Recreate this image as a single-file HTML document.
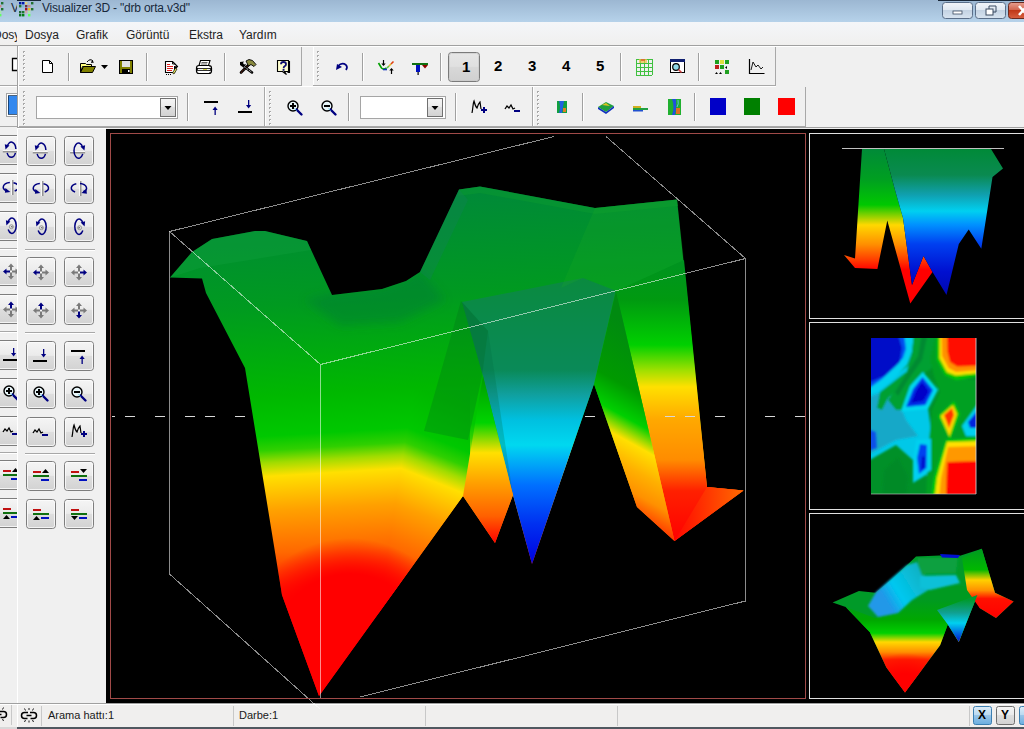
<!DOCTYPE html>
<html><head><meta charset="utf-8">
<style>
*{box-sizing:border-box}
body{margin:0;width:1024px;height:729px;overflow:hidden;position:relative;background:#f0f0f0;font-family:"Liberation Sans",sans-serif;color:#000}
.a{position:absolute}
.mi{position:absolute;top:28px;font-size:12px;color:#1e1e1e;line-height:14px}
.st{position:absolute;top:709px;font-size:11px;color:#1a1a1a;line-height:12px}
.dg{position:absolute;top:58px;font-size:15px;font-weight:bold;line-height:16px}
</style></head><body>

<svg class="a" style="left:0;top:0" width="1024" height="729" viewBox="0 0 1024 729">
<defs>
<linearGradient id="btnG" x1="0" y1="0" x2="0" y2="1">
<stop offset="0" stop-color="#f5f5f5"/><stop offset="0.48" stop-color="#ebebeb"/><stop offset="0.5" stop-color="#dedede"/><stop offset="1" stop-color="#d2d2d2"/>
</linearGradient>
<linearGradient id="btnP" x1="0" y1="0" x2="0" y2="1">
<stop offset="0" stop-color="#e6e6e6"/><stop offset="0.48" stop-color="#e0e0e0"/><stop offset="0.5" stop-color="#d8d8d8"/><stop offset="1" stop-color="#d0d0d0"/>
</linearGradient>
<linearGradient id="tbtn" x1="0" y1="0" x2="0" y2="1">
<stop offset="0" stop-color="#f2f5f9"/><stop offset="0.5" stop-color="#dfe7f0"/><stop offset="0.5" stop-color="#c4d3e3"/><stop offset="1" stop-color="#d8e4f0"/>
</linearGradient>
<linearGradient id="cbtn" x1="0" y1="0" x2="0" y2="1">
<stop offset="0" stop-color="#e8a090"/><stop offset="0.5" stop-color="#d06048"/><stop offset="0.5" stop-color="#c03818"/><stop offset="1" stop-color="#d86040"/>
</linearGradient>
<linearGradient id="xbtn" x1="0" y1="0" x2="0" y2="1">
<stop offset="0" stop-color="#dcecf8"/><stop offset="0.5" stop-color="#b8d8f0"/><stop offset="0.5" stop-color="#98c4e8"/><stop offset="1" stop-color="#6aaee0"/>
</linearGradient>
</defs>
<linearGradient id="ttl" x1="0" y1="0" x2="0" y2="1"><stop offset="0" stop-color="#9cb7d2"/><stop offset="1" stop-color="#b6d2ea"/></linearGradient>
<rect x="0" y="0" width="1024" height="22" fill="url(#ttl)"/>
<linearGradient id="mnu" x1="0" y1="0" x2="0" y2="1"><stop offset="0" stop-color="#f4f6f9"/><stop offset="1" stop-color="#f0efee"/></linearGradient>
<rect x="0" y="22" width="1024" height="24" fill="url(#mnu)"/>
<rect x="17" y="0" width="24" height="1" fill="#1a2838"/>
<rect x="938" y="0" width="86" height="1" fill="#1a2838"/>
<rect x="19" y="2" width="2.4" height="2.4" fill="#0018a0"/>
<rect x="22" y="2" width="2.4" height="2.4" fill="#0018b0"/>
<rect x="25" y="2" width="2.4" height="2.4" fill="#e0d080"/>
<rect x="31" y="2" width="2.4" height="2.4" fill="#207030"/>
<rect x="19" y="5" width="2.4" height="2.4" fill="#207838"/>
<rect x="22" y="5" width="2.4" height="2.4" fill="#80b8d8"/>
<rect x="25" y="5" width="2.4" height="2.4" fill="#703040"/>
<rect x="28" y="5" width="2.4" height="2.4" fill="#d08888"/>
<rect x="25" y="8" width="2.4" height="2.4" fill="#a01020"/>
<rect x="28" y="8" width="2.4" height="2.4" fill="#e8c020"/>
<rect x="31" y="8" width="2.4" height="2.4" fill="#207030"/>
<rect x="19" y="11" width="2.4" height="2.4" fill="#206838"/>
<rect x="22" y="11" width="2.4" height="2.4" fill="#207830"/>
<rect x="25" y="11" width="2.4" height="2.4" fill="#d0a8a8"/>
<rect x="28" y="11" width="2.4" height="2.4" fill="#a8e8a8"/>
<rect x="19" y="14" width="2.4" height="2.4" fill="#107020"/>
<rect x="22" y="14" width="2.4" height="2.4" fill="#008010"/>
<rect x="28" y="14" width="2.4" height="2.4" fill="#60ff60"/>
<rect x="1" y="2" width="2.4" height="2.4" fill="#207030"/><rect x="1" y="8" width="2.4" height="2.4" fill="#207030"/><rect x="0" y="5" width="1.4" height="2.4" fill="#d08888"/><rect x="0" y="11" width="1.4" height="2.4" fill="#a8e8a8"/><rect x="0" y="14" width="1.4" height="2.4" fill="#60ff60"/>
<rect x="942.5" y="2.5" width="30" height="16" rx="3" fill="url(#tbtn)" stroke="#5a6e88"/>
<rect x="953" y="11" width="9" height="3" fill="#fff" stroke="#3a4a60" stroke-width="0.8"/>
<rect x="975.5" y="2.5" width="30" height="16" rx="3" fill="url(#tbtn)" stroke="#5a6e88"/>
<rect x="986" y="9" width="7" height="6" fill="#fff" stroke="#3a4a60" stroke-width="1"/><path d="M989 9 v-3 h7 v6 h-3" fill="none" stroke="#3a4a60" stroke-width="1"/>
<rect x="1008.5" y="2.5" width="30" height="16" rx="3" fill="url(#cbtn)" stroke="#6a2a20"/>
<path d="M1019 6 l8 9 M1027 6 l-8 9" stroke="#fff" stroke-width="2.6"/>
<rect x="0" y="45" width="1024" height="1" fill="#a0a0a0"/><rect x="0" y="46" width="1024" height="1" fill="#fff"/>
<rect x="0" y="127" width="1024" height="1" fill="#a0a0a0"/><rect x="0" y="128" width="106" height="1" fill="#fff"/>
<rect x="17" y="85" width="285" height="1" fill="#a8a8a8"/><rect x="301" y="47" width="1" height="39" fill="#a8a8a8"/>
<rect x="313" y="85" width="463" height="1" fill="#a8a8a8"/><rect x="775" y="47" width="1" height="39" fill="#a8a8a8"/><rect x="313" y="47" width="1" height="38" fill="#fff"/>
<rect x="17" y="86" width="759" height="1" fill="#fff"/>
<rect x="17" y="126" width="248" height="1" fill="#a8a8a8"/><rect x="264" y="87" width="1" height="40" fill="#a8a8a8"/>
<rect x="265" y="126" width="541" height="1" fill="#a8a8a8"/><rect x="805" y="87" width="1" height="40" fill="#a8a8a8"/><rect x="265" y="87" width="1" height="39" fill="#fff"/>
<rect x="17" y="45" width="1" height="83" fill="#a0a0a0"/><rect x="18" y="46" width="1" height="81" fill="#fff"/>
<rect x="532" y="87" width="1" height="39" fill="#a8a8a8"/><rect x="533" y="87" width="1" height="39" fill="#fff"/>
<rect x="23" y="51" width="2" height="2" fill="#a8a8a8"/><rect x="24" y="52" width="1" height="1" fill="#fff"/><rect x="23" y="55" width="2" height="2" fill="#a8a8a8"/><rect x="24" y="56" width="1" height="1" fill="#fff"/><rect x="23" y="59" width="2" height="2" fill="#a8a8a8"/><rect x="24" y="60" width="1" height="1" fill="#fff"/><rect x="23" y="63" width="2" height="2" fill="#a8a8a8"/><rect x="24" y="64" width="1" height="1" fill="#fff"/><rect x="23" y="67" width="2" height="2" fill="#a8a8a8"/><rect x="24" y="68" width="1" height="1" fill="#fff"/><rect x="23" y="71" width="2" height="2" fill="#a8a8a8"/><rect x="24" y="72" width="1" height="1" fill="#fff"/><rect x="23" y="75" width="2" height="2" fill="#a8a8a8"/><rect x="24" y="76" width="1" height="1" fill="#fff"/><rect x="23" y="79" width="2" height="2" fill="#a8a8a8"/><rect x="24" y="80" width="1" height="1" fill="#fff"/>
<rect x="23" y="91" width="2" height="2" fill="#a8a8a8"/><rect x="24" y="92" width="1" height="1" fill="#fff"/><rect x="23" y="95" width="2" height="2" fill="#a8a8a8"/><rect x="24" y="96" width="1" height="1" fill="#fff"/><rect x="23" y="99" width="2" height="2" fill="#a8a8a8"/><rect x="24" y="100" width="1" height="1" fill="#fff"/><rect x="23" y="103" width="2" height="2" fill="#a8a8a8"/><rect x="24" y="104" width="1" height="1" fill="#fff"/><rect x="23" y="107" width="2" height="2" fill="#a8a8a8"/><rect x="24" y="108" width="1" height="1" fill="#fff"/><rect x="23" y="111" width="2" height="2" fill="#a8a8a8"/><rect x="24" y="112" width="1" height="1" fill="#fff"/><rect x="23" y="115" width="2" height="2" fill="#a8a8a8"/><rect x="24" y="116" width="1" height="1" fill="#fff"/><rect x="23" y="119" width="2" height="2" fill="#a8a8a8"/><rect x="24" y="120" width="1" height="1" fill="#fff"/><rect x="23" y="123" width="2" height="2" fill="#a8a8a8"/><rect x="24" y="124" width="1" height="1" fill="#fff"/>
<rect x="317" y="51" width="2" height="2" fill="#a8a8a8"/><rect x="318" y="52" width="1" height="1" fill="#fff"/><rect x="317" y="55" width="2" height="2" fill="#a8a8a8"/><rect x="318" y="56" width="1" height="1" fill="#fff"/><rect x="317" y="59" width="2" height="2" fill="#a8a8a8"/><rect x="318" y="60" width="1" height="1" fill="#fff"/><rect x="317" y="63" width="2" height="2" fill="#a8a8a8"/><rect x="318" y="64" width="1" height="1" fill="#fff"/><rect x="317" y="67" width="2" height="2" fill="#a8a8a8"/><rect x="318" y="68" width="1" height="1" fill="#fff"/><rect x="317" y="71" width="2" height="2" fill="#a8a8a8"/><rect x="318" y="72" width="1" height="1" fill="#fff"/><rect x="317" y="75" width="2" height="2" fill="#a8a8a8"/><rect x="318" y="76" width="1" height="1" fill="#fff"/><rect x="317" y="79" width="2" height="2" fill="#a8a8a8"/><rect x="318" y="80" width="1" height="1" fill="#fff"/>
<rect x="269" y="91" width="2" height="2" fill="#a8a8a8"/><rect x="270" y="92" width="1" height="1" fill="#fff"/><rect x="269" y="95" width="2" height="2" fill="#a8a8a8"/><rect x="270" y="96" width="1" height="1" fill="#fff"/><rect x="269" y="99" width="2" height="2" fill="#a8a8a8"/><rect x="270" y="100" width="1" height="1" fill="#fff"/><rect x="269" y="103" width="2" height="2" fill="#a8a8a8"/><rect x="270" y="104" width="1" height="1" fill="#fff"/><rect x="269" y="107" width="2" height="2" fill="#a8a8a8"/><rect x="270" y="108" width="1" height="1" fill="#fff"/><rect x="269" y="111" width="2" height="2" fill="#a8a8a8"/><rect x="270" y="112" width="1" height="1" fill="#fff"/><rect x="269" y="115" width="2" height="2" fill="#a8a8a8"/><rect x="270" y="116" width="1" height="1" fill="#fff"/><rect x="269" y="119" width="2" height="2" fill="#a8a8a8"/><rect x="270" y="120" width="1" height="1" fill="#fff"/><rect x="269" y="123" width="2" height="2" fill="#a8a8a8"/><rect x="270" y="124" width="1" height="1" fill="#fff"/>
<rect x="537" y="91" width="2" height="2" fill="#a8a8a8"/><rect x="538" y="92" width="1" height="1" fill="#fff"/><rect x="537" y="95" width="2" height="2" fill="#a8a8a8"/><rect x="538" y="96" width="1" height="1" fill="#fff"/><rect x="537" y="99" width="2" height="2" fill="#a8a8a8"/><rect x="538" y="100" width="1" height="1" fill="#fff"/><rect x="537" y="103" width="2" height="2" fill="#a8a8a8"/><rect x="538" y="104" width="1" height="1" fill="#fff"/><rect x="537" y="107" width="2" height="2" fill="#a8a8a8"/><rect x="538" y="108" width="1" height="1" fill="#fff"/><rect x="537" y="111" width="2" height="2" fill="#a8a8a8"/><rect x="538" y="112" width="1" height="1" fill="#fff"/><rect x="537" y="115" width="2" height="2" fill="#a8a8a8"/><rect x="538" y="116" width="1" height="1" fill="#fff"/><rect x="537" y="119" width="2" height="2" fill="#a8a8a8"/><rect x="538" y="120" width="1" height="1" fill="#fff"/><rect x="537" y="123" width="2" height="2" fill="#a8a8a8"/><rect x="538" y="124" width="1" height="1" fill="#fff"/>
<rect x="68" y="53" width="1" height="28" fill="#a0a0a0"/><rect x="69" y="53" width="1" height="28" fill="#ffffff"/>
<rect x="146" y="53" width="1" height="28" fill="#a0a0a0"/><rect x="147" y="53" width="1" height="28" fill="#ffffff"/>
<rect x="224" y="53" width="1" height="28" fill="#a0a0a0"/><rect x="225" y="53" width="1" height="28" fill="#ffffff"/>
<rect x="362" y="53" width="1" height="28" fill="#a0a0a0"/><rect x="363" y="53" width="1" height="28" fill="#ffffff"/>
<rect x="440" y="53" width="1" height="28" fill="#a0a0a0"/><rect x="441" y="53" width="1" height="28" fill="#ffffff"/>
<rect x="620" y="53" width="1" height="28" fill="#a0a0a0"/><rect x="621" y="53" width="1" height="28" fill="#ffffff"/>
<rect x="698" y="53" width="1" height="28" fill="#a0a0a0"/><rect x="699" y="53" width="1" height="28" fill="#ffffff"/>
<rect x="187" y="93" width="1" height="28" fill="#a0a0a0"/><rect x="188" y="93" width="1" height="28" fill="#ffffff"/>
<rect x="348" y="93" width="1" height="28" fill="#a0a0a0"/><rect x="349" y="93" width="1" height="28" fill="#ffffff"/>
<rect x="455" y="93" width="1" height="28" fill="#a0a0a0"/><rect x="456" y="93" width="1" height="28" fill="#ffffff"/>
<rect x="582" y="93" width="1" height="28" fill="#a0a0a0"/><rect x="583" y="93" width="1" height="28" fill="#ffffff"/>
<rect x="694" y="93" width="1" height="28" fill="#a0a0a0"/><rect x="695" y="93" width="1" height="28" fill="#ffffff"/>
<path d="M42.5 60.5 h7 l3 3 v9 h-10 z" fill="#fff" stroke="#000"/><path d="M49.5 60.5 v3 h3" fill="none" stroke="#000"/>
<path d="M80.5 63.5 h5 l1 1 h5 v2 h-9 l-2 6 z" fill="#ffff80" stroke="#000"/><path d="M80.5 72.5 l3 -6 h12 l-3 6 z" fill="#808000" stroke="#000"/>
<path d="M87 62 q3 -4 6 -1" fill="none" stroke="#000" stroke-width="1"/><path d="M92 60 l2 2.5 l-3 0.5 z" fill="#000"/>
<path d="M101 65 h7 l-3.5 4 z" fill="#000"/>
<rect x="119.5" y="60.5" width="13" height="13" fill="#808000" stroke="#000"/><rect x="122" y="61" width="8" height="6" fill="#e0e0e0"/><rect x="122" y="69" width="8" height="4" fill="#000"/><rect x="128" y="70" width="1.5" height="2" fill="#fff"/>
<path d="M165.5 61.5 h7 l2 2 l3 3 l-3 3 v3 h-9 z" fill="#fff" stroke="#000" stroke-width="1.1"/><path d="M172.5 61.5 v2.5 h2.5" fill="none" stroke="#000" stroke-width="0.9"/><path d="M174 66 l3.5 0.5 l-3.5 3.5 z" fill="#000"/>
<rect x="167" y="64" width="3" height="1" fill="#e02020"/><rect x="167" y="66" width="6" height="1" fill="#e02020"/><rect x="167" y="68" width="6" height="1" fill="#e02020"/><rect x="167" y="70" width="5" height="1" fill="#e02020"/>
<path d="M172.5 73 l3 -5 l1.5 1 l-3 5 z" fill="#f0f060" stroke="#000" stroke-width="0.7"/><path d="M166 74.5 h1 M168 74.5 h1 M170 74.5 h1" stroke="#000" stroke-width="1.1"/>
<path d="M200.5 60.5 h9.5 l-1.5 5 h-9.5 z" fill="#fff" stroke="#000" stroke-width="1.1"/><path d="M201.5 62.5 h6 M201 64 h6" stroke="#000" stroke-width="0.6"/>
<rect x="196.5" y="65.5" width="15" height="8" rx="2.5" fill="#fff" stroke="#000" stroke-width="1.2"/><rect x="197.5" y="68.5" width="13" height="2" fill="#f0f0f0" stroke="#000" stroke-width="0.8"/><rect x="203" y="69" width="4" height="1" fill="#d0d040"/><path d="M210 66 v7" stroke="#000" stroke-dasharray="1 1" stroke-width="0.8"/>
<path d="M241 72.5 l8 -8" stroke="#000" stroke-width="2.6" stroke-linecap="round"/><path d="M241 72.5 l8 -8" stroke="#6a2a1a" stroke-width="1.2" stroke-dasharray="1 1"/>
<path d="M246 61 l3 -1.5 l3.5 1 l3.5 4 l-2 2 l-3 -2 l-2.5 1.5 z" fill="#8a8a40" stroke="#000" stroke-width="0.9"/>
<path d="M243.5 66 l8.5 6.5" stroke="#000" stroke-width="2.6" stroke-linecap="round"/><path d="M244 66.5 l7.5 5.5" stroke="#fff" stroke-width="1" stroke-dasharray="1 1"/>
<path d="M240 62 v3 l2 1.5 l3 -0.5 l1 -2 l-2 0.5 l-1 -1.5 l1 -1.5 z" fill="#000"/>
<path d="M277.5 60.5 h11 v11 h-4 l2 3 l-4 -3 h-5 z" fill="#ffffd0" stroke="#000" stroke-width="1.1"/><path d="M289.5 61 v11.5 h-2" fill="none" stroke="#000" stroke-width="1.1"/>
<path d="M281 64.3 q0 -2.3 2.4 -2.3 q2.6 0 2.6 2.2 q0 1.3 -1.4 2 q-0.9 0.5 -0.9 1.6 v0.4" fill="none" stroke="#101070" stroke-width="1.8"/><rect x="282.6" y="69" width="1.9" height="1.8" fill="#101070"/>
<path d="M338 66 q4 -4 8 -1 q2 2 0 5" fill="none" stroke="#000080" stroke-width="1.7"/><path d="M336 70 l1 -6 l5 3 z" fill="#000080"/>
<path d="M378.5 63 l3 5 q2 2 5 0" fill="none" stroke="#00a000" stroke-width="1.6"/><path d="M383 69.5 h4" stroke="#1030c0" stroke-width="1.6"/><path d="M387 68 l2 -2" stroke="#60c040" stroke-width="1.6"/><path d="M389 66 l2 -2" stroke="#e0c020" stroke-width="1.6"/><path d="M391 64 l2.5 -2.5" stroke="#e04010" stroke-width="1.6"/>
<path d="M383.5 60 v5" stroke="#000" stroke-width="1.2"/><path d="M381.3 63.5 l2.2 2.5 l2.2 -2.5 z" fill="#000"/><path d="M391.5 74 v-5" stroke="#000" stroke-width="1.2"/><path d="M389.3 70.5 l2.2 -2.5 l2.2 2.5 z" fill="#000"/>
<rect x="412" y="63" width="16" height="2" fill="#107010"/><rect x="416" y="65" width="4" height="7" fill="#0010c0"/><rect x="417.5" y="72" width="1.2" height="3" fill="#000"/><path d="M422 65 h6 l-3 3.5 z" fill="#900000"/>
<rect x="448.5" y="52.5" width="31" height="29" rx="3" fill="url(#btnP)" stroke="#7a7a7a"/><rect x="449.5" y="53.5" width="29" height="27" rx="2" fill="none" stroke="#c8c8c8" stroke-opacity="0.6"/>
<rect x="636" y="59" width="1" height="16" fill="#40c040"/>
<rect x="636" y="59" width="16" height="1" fill="#40c040"/>
<rect x="640" y="59" width="1" height="16" fill="#40c040"/>
<rect x="636" y="63" width="16" height="1" fill="#40c040"/>
<rect x="644" y="59" width="1" height="16" fill="#40c040"/>
<rect x="636" y="67" width="16" height="1" fill="#40c040"/>
<rect x="648" y="59" width="1" height="16" fill="#40c040"/>
<rect x="636" y="71" width="16" height="1" fill="#40c040"/>
<rect x="652" y="59" width="1" height="16" fill="#40c040"/>
<rect x="636" y="75" width="16" height="1" fill="#40c040"/>
<rect x="639" y="59" width="8" height="4" fill="#f0c040" opacity="0.7"/><rect x="641" y="59" width="4" height="2" fill="#e06030" opacity="0.8"/>
<rect x="670.5" y="59.5" width="14" height="13" fill="#fff" stroke="#000"/><rect x="670" y="59" width="15" height="3" fill="#102070"/><circle cx="676" cy="67" r="3.3" fill="#90d8e8" stroke="#000" stroke-width="1.2"/><path d="M678.5 69.5 l3 3" stroke="#d04040" stroke-width="1.6"/>
<rect x="715" y="60" width="4" height="4" fill="#20a020"/>
<rect x="720" y="60" width="4" height="4" fill="#e0e040"/>
<rect x="725" y="60" width="4" height="4" fill="#20a020"/>
<rect x="715" y="65" width="4" height="4" fill="#c02020"/>
<rect x="720" y="65" width="4" height="4" fill="#20a020"/>
<rect x="725" y="70" width="4" height="4" fill="#20a020"/>
<path d="M727 66 l-2 1.5 l2 1.5 z" fill="#000"/><path d="M715 74 l1.5 -2 l1.5 2 z M719 74 l1.5 -2 l1.5 2 z" fill="#000"/>
<path d="M749.5 59 v14.5 h15" fill="none" stroke="#000" stroke-width="1.2"/><path d="M751 70 l2 -8 l3 5 l2 -2 l3 4 l2 -2" fill="none" stroke="#000" stroke-width="0.9"/>
<rect x="36.5" y="96.5" width="141" height="22" fill="#fff" stroke="#a5a5a5"/><rect x="160.5" y="98.5" width="15" height="18" fill="url(#btnG)" stroke="#707070"/><path d="M164.5 106 h7 l-3.5 4 z" fill="#000"/>
<rect x="204" y="101" width="14" height="2" fill="#000"/><rect x="214.5" y="108" width="1.3" height="7" fill="#000080"/><path d="M212.5 110 l2.6 -3.5 l2.6 3.5 z" fill="#000080"/>
<rect x="238" y="111" width="14" height="2" fill="#000"/><rect x="248" y="100" width="1.3" height="7" fill="#000080"/><path d="M246 105 l2.6 3.5 l2.6 -3.5 z" fill="#000080"/>
<circle cx="293" cy="106" r="5" fill="#e8f6fa" stroke="#000" stroke-width="1.4"/><path d="M296.5 109.5 l5 5" stroke="#000080" stroke-width="2.4" stroke-linecap="round"/><rect x="290" y="105" width="6" height="2" fill="#000"/><rect x="292" y="103" width="2" height="6" fill="#000"/><path d="M294.5 108.5 l2 2" stroke="#60c8e0" stroke-width="1"/>
<circle cx="327" cy="106" r="5" fill="#e8f6fa" stroke="#000" stroke-width="1.4"/><path d="M330.5 109.5 l5 5" stroke="#000080" stroke-width="2.4" stroke-linecap="round"/><rect x="324" y="105" width="6" height="2" fill="#000"/><path d="M328.5 108.5 l2 2" stroke="#60c8e0" stroke-width="1"/>
<rect x="360.5" y="96.5" width="85" height="22" fill="#fff" stroke="#a5a5a5"/><rect x="427.5" y="98.5" width="15" height="18" fill="url(#btnG)" stroke="#707070"/><path d="M431.5 106 h7 l-3.5 4 z" fill="#000"/>
<path d="M472 113 C473 108 473 103 474 101 C475 105 476 107 477 108 C478 105 479 103 480 102 L481 109" fill="none" stroke="#000" stroke-width="1.2"/><rect x="481" y="109" width="6" height="2" fill="#000080"/><rect x="483" y="107" width="2" height="6" fill="#000080"/>
<path d="M505 109 l2 -3 l2 2 l2 -3 l2 4 l2 -1" fill="none" stroke="#000" stroke-width="1.3"/><rect x="514" y="110" width="6" height="2" fill="#000080"/>
<rect x="557" y="101" width="10" height="12" fill="#10a040"/><path d="M559 101 q2 6 0 12 h3 q1 -6 2 -12 z" fill="#2060e0"/><rect x="563" y="108" width="3" height="4" fill="#e08020"/>
<path d="M598 107 l8 -5 l8 4 l-8 6 z" fill="#20a040"/><path d="M598 107 l8 5 l8 -6 v2 l-8 6 l-8 -5 z" fill="#1030c0"/><path d="M602 105 l4 -2 l4 3 z" fill="#e0c020"/>
<rect x="633" y="106" width="8" height="2" fill="#d0b020"/><rect x="633" y="108" width="15" height="2" fill="#20a040"/><rect x="633" y="110" width="10" height="1.5" fill="#2050d0"/>
<rect x="668" y="99" width="13" height="16" fill="#20b030"/><path d="M672 99 q3 8 0 16 h3 q2 -8 1 -16 z" fill="#2050e0"/><rect x="676" y="108" width="4" height="6" fill="#e07020"/><path d="M678 100 q1 4 -1 7" stroke="#60c0e0" fill="none"/>
<rect x="710" y="98" width="16" height="17" fill="#0000c8"/><rect x="744" y="98" width="16" height="17" fill="#008000"/><rect x="778" y="98" width="17" height="17" fill="#ff0000"/>
<rect x="26.5" y="136.5" width="29" height="29" rx="3" fill="url(#btnG)" stroke="#7d7d7d"/><rect x="27.5" y="137.5" width="27" height="27" rx="2" fill="none" stroke="#fcfcfc" stroke-opacity="0.8"/><rect x="64.5" y="136.5" width="29" height="29" rx="3" fill="url(#btnG)" stroke="#7d7d7d"/><rect x="65.5" y="137.5" width="27" height="27" rx="2" fill="none" stroke="#fcfcfc" stroke-opacity="0.8"/><rect x="26.5" y="174.5" width="29" height="29" rx="3" fill="url(#btnG)" stroke="#7d7d7d"/><rect x="27.5" y="175.5" width="27" height="27" rx="2" fill="none" stroke="#fcfcfc" stroke-opacity="0.8"/><rect x="64.5" y="174.5" width="29" height="29" rx="3" fill="url(#btnG)" stroke="#7d7d7d"/><rect x="65.5" y="175.5" width="27" height="27" rx="2" fill="none" stroke="#fcfcfc" stroke-opacity="0.8"/><rect x="26.5" y="212.5" width="29" height="29" rx="3" fill="url(#btnG)" stroke="#7d7d7d"/><rect x="27.5" y="213.5" width="27" height="27" rx="2" fill="none" stroke="#fcfcfc" stroke-opacity="0.8"/><rect x="64.5" y="212.5" width="29" height="29" rx="3" fill="url(#btnG)" stroke="#7d7d7d"/><rect x="65.5" y="213.5" width="27" height="27" rx="2" fill="none" stroke="#fcfcfc" stroke-opacity="0.8"/><rect x="26.5" y="257.5" width="29" height="29" rx="3" fill="url(#btnG)" stroke="#7d7d7d"/><rect x="27.5" y="258.5" width="27" height="27" rx="2" fill="none" stroke="#fcfcfc" stroke-opacity="0.8"/><rect x="64.5" y="257.5" width="29" height="29" rx="3" fill="url(#btnG)" stroke="#7d7d7d"/><rect x="65.5" y="258.5" width="27" height="27" rx="2" fill="none" stroke="#fcfcfc" stroke-opacity="0.8"/><rect x="26.5" y="295.5" width="29" height="29" rx="3" fill="url(#btnG)" stroke="#7d7d7d"/><rect x="27.5" y="296.5" width="27" height="27" rx="2" fill="none" stroke="#fcfcfc" stroke-opacity="0.8"/><rect x="64.5" y="295.5" width="29" height="29" rx="3" fill="url(#btnG)" stroke="#7d7d7d"/><rect x="65.5" y="296.5" width="27" height="27" rx="2" fill="none" stroke="#fcfcfc" stroke-opacity="0.8"/><rect x="26.5" y="341.5" width="29" height="29" rx="3" fill="url(#btnG)" stroke="#7d7d7d"/><rect x="27.5" y="342.5" width="27" height="27" rx="2" fill="none" stroke="#fcfcfc" stroke-opacity="0.8"/><rect x="64.5" y="341.5" width="29" height="29" rx="3" fill="url(#btnG)" stroke="#7d7d7d"/><rect x="65.5" y="342.5" width="27" height="27" rx="2" fill="none" stroke="#fcfcfc" stroke-opacity="0.8"/><rect x="26.5" y="379.5" width="29" height="29" rx="3" fill="url(#btnG)" stroke="#7d7d7d"/><rect x="27.5" y="380.5" width="27" height="27" rx="2" fill="none" stroke="#fcfcfc" stroke-opacity="0.8"/><rect x="64.5" y="379.5" width="29" height="29" rx="3" fill="url(#btnG)" stroke="#7d7d7d"/><rect x="65.5" y="380.5" width="27" height="27" rx="2" fill="none" stroke="#fcfcfc" stroke-opacity="0.8"/><rect x="26.5" y="417.5" width="29" height="29" rx="3" fill="url(#btnG)" stroke="#7d7d7d"/><rect x="27.5" y="418.5" width="27" height="27" rx="2" fill="none" stroke="#fcfcfc" stroke-opacity="0.8"/><rect x="64.5" y="417.5" width="29" height="29" rx="3" fill="url(#btnG)" stroke="#7d7d7d"/><rect x="65.5" y="418.5" width="27" height="27" rx="2" fill="none" stroke="#fcfcfc" stroke-opacity="0.8"/><rect x="26.5" y="461.5" width="29" height="29" rx="3" fill="url(#btnG)" stroke="#7d7d7d"/><rect x="27.5" y="462.5" width="27" height="27" rx="2" fill="none" stroke="#fcfcfc" stroke-opacity="0.8"/><rect x="64.5" y="461.5" width="29" height="29" rx="3" fill="url(#btnG)" stroke="#7d7d7d"/><rect x="65.5" y="462.5" width="27" height="27" rx="2" fill="none" stroke="#fcfcfc" stroke-opacity="0.8"/><rect x="26.5" y="499.5" width="29" height="29" rx="3" fill="url(#btnG)" stroke="#7d7d7d"/><rect x="27.5" y="500.5" width="27" height="27" rx="2" fill="none" stroke="#fcfcfc" stroke-opacity="0.8"/><rect x="64.5" y="499.5" width="29" height="29" rx="3" fill="url(#btnG)" stroke="#7d7d7d"/><rect x="65.5" y="500.5" width="27" height="27" rx="2" fill="none" stroke="#fcfcfc" stroke-opacity="0.8"/><rect x="25" y="249" width="70" height="1" fill="#a8a8a8"/><rect x="25" y="250" width="70" height="1" fill="#fff"/><rect x="25" y="332" width="70" height="1" fill="#a8a8a8"/><rect x="25" y="333" width="70" height="1" fill="#fff"/><rect x="25" y="453" width="70" height="1" fill="#a8a8a8"/><rect x="25" y="454" width="70" height="1" fill="#fff"/><rect x="32.8" y="151.2" width="15" height="1" fill="#ffffff"/><rect x="32.8" y="152.2" width="15" height="1.2" fill="#808080"/><path d="M37.13 147.49 A4.6 7.6 0 0 1 45.88 150.04" fill="none" stroke="#000080" stroke-width="1.5"/><path d="M45.47 153.91 A4.6 7.6 0 0 1 37.13 153.91" fill="none" stroke="#000080" stroke-width="1.5"/><path d="M34.8 145.2 L39.5 146.5 L35.5 150.39999999999998 z" fill="#000080"/><rect x="70.1" y="151.2" width="15" height="1" fill="#ffffff"/><rect x="70.1" y="152.2" width="15" height="1.2" fill="#808080"/><path d="M82.77 147.49 A4.6 7.6 0 1 0 82.77 153.91" fill="none" stroke="#000080" stroke-width="1.5"/><path d="M85.1 145.2 L80.39999999999999 146.5 L84.39999999999999 150.39999999999998 z" fill="#000080"/><rect x="41.199999999999996" y="181" width="1" height="15" fill="#ffffff"/><rect x="42.199999999999996" y="181" width="1.2" height="15" fill="#808080"/><path d="M39.84 183.44 A7.6 4.6 0 0 0 36.54 191.77" fill="none" stroke="#000080" stroke-width="1.5"/><path d="M43.5 183.68 A7.6 4.6 0 0 1 44.7 191.98" fill="none" stroke="#000080" stroke-width="1.5"/><path d="M35.4 189 L40.4 193 L34.9 193.8 z" fill="#000080"/><rect x="79.2" y="181" width="1" height="15" fill="#ffffff"/><rect x="80.2" y="181" width="1.2" height="15" fill="#808080"/><path d="M79.96 183.44 A7.6 4.6 0 0 1 83.26 191.77" fill="none" stroke="#000080" stroke-width="1.5"/><path d="M76.3 183.68 A7.6 4.6 0 0 0 75.1 191.98" fill="none" stroke="#000080" stroke-width="1.5"/><path d="M86.4 189 L81.4 193 L86.9 193.8 z" fill="#000080"/><path d="M38.0 223.45 A4.3 7.7 0 1 1 38.18 230.55" fill="none" stroke="#000080" stroke-width="1.5"/><path d="M35.9 221.2 L40.4 222.5 L36.4 226.39999999999998 z" fill="#000080"/><circle cx="41.4" cy="227.7" r="2" fill="#e0e0e0" stroke="#8a8a8a" stroke-width="0.8"/><path d="M42.4 226.7 l-1.5 1 l1.5 1 z" fill="#404040"/><path d="M83.0 223.45 A4.3 7.7 0 1 0 82.82 230.55" fill="none" stroke="#000080" stroke-width="1.5"/><path d="M85.1 221.2 L80.6 222.5 L84.6 226.39999999999998 z" fill="#000080"/><circle cx="79.6" cy="227.7" r="2" fill="#e0e0e0" stroke="#8a8a8a" stroke-width="0.8"/><path d="M78.6 226.7 l1.5 1 l-1.5 1 z" fill="#404040"/><rect x="40" y="271.5" width="2" height="2" fill="#f8f8f8"/><path d="M33 272.5 l3.5 -3 v2 h3.5 v2 h-3.5 v2 z" fill="#000080"/><path d="M49 272.5 l-3.5 -3 v2 h-3.5 v2 h3.5 v2 z" fill="#7a7a7a"/><path d="M41 264.5 l-3 3.5 h2 v3.5 h2 v-3.5 h2 z" fill="#7a7a7a"/><path d="M41 280.5 l-3 -3.5 h2 v-3.5 h2 v3.5 h2 z" fill="#7a7a7a"/><rect x="78" y="271.5" width="2" height="2" fill="#f8f8f8"/><path d="M71 272.5 l3.5 -3 v2 h3.5 v2 h-3.5 v2 z" fill="#7a7a7a"/><path d="M87 272.5 l-3.5 -3 v2 h-3.5 v2 h3.5 v2 z" fill="#000080"/><path d="M79 264.5 l-3 3.5 h2 v3.5 h2 v-3.5 h2 z" fill="#7a7a7a"/><path d="M79 280.5 l-3 -3.5 h2 v-3.5 h2 v3.5 h2 z" fill="#7a7a7a"/><rect x="40" y="309.5" width="2" height="2" fill="#f8f8f8"/><path d="M33 310.5 l3.5 -3 v2 h3.5 v2 h-3.5 v2 z" fill="#7a7a7a"/><path d="M49 310.5 l-3.5 -3 v2 h-3.5 v2 h3.5 v2 z" fill="#7a7a7a"/><path d="M41 302.5 l-3 3.5 h2 v3.5 h2 v-3.5 h2 z" fill="#000080"/><path d="M41 318.5 l-3 -3.5 h2 v-3.5 h2 v3.5 h2 z" fill="#7a7a7a"/><rect x="78" y="309.5" width="2" height="2" fill="#f8f8f8"/><path d="M71 310.5 l3.5 -3 v2 h3.5 v2 h-3.5 v2 z" fill="#7a7a7a"/><path d="M87 310.5 l-3.5 -3 v2 h-3.5 v2 h3.5 v2 z" fill="#7a7a7a"/><path d="M79 302.5 l-3 3.5 h2 v3.5 h2 v-3.5 h2 z" fill="#7a7a7a"/><path d="M79 318.5 l-3 -3.5 h2 v-3.5 h2 v3.5 h2 z" fill="#000080"/><rect x="33" y="360" width="14" height="2" fill="#000"/><rect x="43" y="349" width="1.3" height="7" fill="#000080"/><path d="M41 354 l2.6 3.5 l2.6 -3.5 z" fill="#000080"/><rect x="71" y="350" width="14" height="2" fill="#000"/><rect x="81.5" y="357" width="1.3" height="7" fill="#000080"/><path d="M79.5 359 l2.6 -3.5 l2.6 3.5 z" fill="#000080"/><circle cx="39" cy="392" r="5" fill="#e8f6fa" stroke="#000" stroke-width="1.4"/><path d="M42.5 395.5 l5 5" stroke="#000080" stroke-width="2.4" stroke-linecap="round"/><rect x="36" y="391" width="6" height="2" fill="#000"/><rect x="38" y="389" width="2" height="6" fill="#000"/><path d="M40.5 394.5 l2 2" stroke="#60c8e0" stroke-width="1"/><circle cx="77" cy="392" r="5" fill="#e8f6fa" stroke="#000" stroke-width="1.4"/><path d="M80.5 395.5 l5 5" stroke="#000080" stroke-width="2.4" stroke-linecap="round"/><rect x="74" y="391" width="6" height="2" fill="#000"/><path d="M78.5 394.5 l2 2" stroke="#60c8e0" stroke-width="1"/><path d="M33 433 l2 -3 l2 2 l2 -3 l2 4 l2 -1" fill="none" stroke="#000" stroke-width="1.3"/><rect x="42" y="434" width="6" height="2" fill="#000080"/><path d="M72 437 C73 432 73 427 74 425 C75 429 76 431 77 432 C78 429 79 427 80 426 L81 433" fill="none" stroke="#000" stroke-width="1.2"/><rect x="81" y="433" width="6" height="2" fill="#000080"/><rect x="83" y="431" width="2" height="6" fill="#000080"/><rect x="33" y="471" width="8" height="2" fill="#c01010"/><rect x="33" y="475" width="16" height="2" fill="#107010"/><rect x="41" y="479" width="8" height="2" fill="#0010c0"/><path d="M42 473 l3.5 -4 l3.5 4 z" fill="#000"/><rect x="71" y="471" width="8" height="2" fill="#c01010"/><rect x="71" y="475" width="16" height="2" fill="#107010"/><rect x="79" y="479" width="8" height="2" fill="#0010c0"/><path d="M80 469 l3.5 4 l3.5 -4 z" fill="#000"/><rect x="33" y="509" width="8" height="2" fill="#c01010"/><rect x="33" y="513" width="16" height="2" fill="#107010"/><rect x="41" y="517" width="8" height="2" fill="#0010c0"/><path d="M33 520 l3.5 -4 l3.5 4 z" fill="#000"/><rect x="71" y="509" width="8" height="2" fill="#c01010"/><rect x="71" y="513" width="16" height="2" fill="#107010"/><rect x="79" y="517" width="8" height="2" fill="#0010c0"/><path d="M71 516 l3.5 4 l3.5 -4 z" fill="#000"/>
<clipPath id="bgclip"><rect x="0" y="0" width="17" height="729"/></clipPath>
<g clip-path="url(#bgclip)"><rect x="0" y="46" width="17" height="657" fill="#f0f0f0"/>
<rect x="0" y="85" width="17" height="1" fill="#a8a8a8"/><rect x="0" y="86" width="17" height="1" fill="#fff"/><rect x="0" y="126" width="17" height="1" fill="#a8a8a8"/>
<g transform="translate(-30,-1)">
<rect x="26.5" y="136.5" width="29" height="29" rx="3" fill="url(#btnG)" stroke="#7d7d7d"/><rect x="27.5" y="137.5" width="27" height="27" rx="2" fill="none" stroke="#fcfcfc" stroke-opacity="0.8"/><rect x="64.5" y="136.5" width="29" height="29" rx="3" fill="url(#btnG)" stroke="#7d7d7d"/><rect x="65.5" y="137.5" width="27" height="27" rx="2" fill="none" stroke="#fcfcfc" stroke-opacity="0.8"/><rect x="26.5" y="174.5" width="29" height="29" rx="3" fill="url(#btnG)" stroke="#7d7d7d"/><rect x="27.5" y="175.5" width="27" height="27" rx="2" fill="none" stroke="#fcfcfc" stroke-opacity="0.8"/><rect x="64.5" y="174.5" width="29" height="29" rx="3" fill="url(#btnG)" stroke="#7d7d7d"/><rect x="65.5" y="175.5" width="27" height="27" rx="2" fill="none" stroke="#fcfcfc" stroke-opacity="0.8"/><rect x="26.5" y="212.5" width="29" height="29" rx="3" fill="url(#btnG)" stroke="#7d7d7d"/><rect x="27.5" y="213.5" width="27" height="27" rx="2" fill="none" stroke="#fcfcfc" stroke-opacity="0.8"/><rect x="64.5" y="212.5" width="29" height="29" rx="3" fill="url(#btnG)" stroke="#7d7d7d"/><rect x="65.5" y="213.5" width="27" height="27" rx="2" fill="none" stroke="#fcfcfc" stroke-opacity="0.8"/><rect x="26.5" y="257.5" width="29" height="29" rx="3" fill="url(#btnG)" stroke="#7d7d7d"/><rect x="27.5" y="258.5" width="27" height="27" rx="2" fill="none" stroke="#fcfcfc" stroke-opacity="0.8"/><rect x="64.5" y="257.5" width="29" height="29" rx="3" fill="url(#btnG)" stroke="#7d7d7d"/><rect x="65.5" y="258.5" width="27" height="27" rx="2" fill="none" stroke="#fcfcfc" stroke-opacity="0.8"/><rect x="26.5" y="295.5" width="29" height="29" rx="3" fill="url(#btnG)" stroke="#7d7d7d"/><rect x="27.5" y="296.5" width="27" height="27" rx="2" fill="none" stroke="#fcfcfc" stroke-opacity="0.8"/><rect x="64.5" y="295.5" width="29" height="29" rx="3" fill="url(#btnG)" stroke="#7d7d7d"/><rect x="65.5" y="296.5" width="27" height="27" rx="2" fill="none" stroke="#fcfcfc" stroke-opacity="0.8"/><rect x="26.5" y="341.5" width="29" height="29" rx="3" fill="url(#btnG)" stroke="#7d7d7d"/><rect x="27.5" y="342.5" width="27" height="27" rx="2" fill="none" stroke="#fcfcfc" stroke-opacity="0.8"/><rect x="64.5" y="341.5" width="29" height="29" rx="3" fill="url(#btnG)" stroke="#7d7d7d"/><rect x="65.5" y="342.5" width="27" height="27" rx="2" fill="none" stroke="#fcfcfc" stroke-opacity="0.8"/><rect x="26.5" y="379.5" width="29" height="29" rx="3" fill="url(#btnG)" stroke="#7d7d7d"/><rect x="27.5" y="380.5" width="27" height="27" rx="2" fill="none" stroke="#fcfcfc" stroke-opacity="0.8"/><rect x="64.5" y="379.5" width="29" height="29" rx="3" fill="url(#btnG)" stroke="#7d7d7d"/><rect x="65.5" y="380.5" width="27" height="27" rx="2" fill="none" stroke="#fcfcfc" stroke-opacity="0.8"/><rect x="26.5" y="417.5" width="29" height="29" rx="3" fill="url(#btnG)" stroke="#7d7d7d"/><rect x="27.5" y="418.5" width="27" height="27" rx="2" fill="none" stroke="#fcfcfc" stroke-opacity="0.8"/><rect x="64.5" y="417.5" width="29" height="29" rx="3" fill="url(#btnG)" stroke="#7d7d7d"/><rect x="65.5" y="418.5" width="27" height="27" rx="2" fill="none" stroke="#fcfcfc" stroke-opacity="0.8"/><rect x="26.5" y="461.5" width="29" height="29" rx="3" fill="url(#btnG)" stroke="#7d7d7d"/><rect x="27.5" y="462.5" width="27" height="27" rx="2" fill="none" stroke="#fcfcfc" stroke-opacity="0.8"/><rect x="64.5" y="461.5" width="29" height="29" rx="3" fill="url(#btnG)" stroke="#7d7d7d"/><rect x="65.5" y="462.5" width="27" height="27" rx="2" fill="none" stroke="#fcfcfc" stroke-opacity="0.8"/><rect x="26.5" y="499.5" width="29" height="29" rx="3" fill="url(#btnG)" stroke="#7d7d7d"/><rect x="27.5" y="500.5" width="27" height="27" rx="2" fill="none" stroke="#fcfcfc" stroke-opacity="0.8"/><rect x="64.5" y="499.5" width="29" height="29" rx="3" fill="url(#btnG)" stroke="#7d7d7d"/><rect x="65.5" y="500.5" width="27" height="27" rx="2" fill="none" stroke="#fcfcfc" stroke-opacity="0.8"/><rect x="25" y="249" width="70" height="1" fill="#a8a8a8"/><rect x="25" y="250" width="70" height="1" fill="#fff"/><rect x="25" y="332" width="70" height="1" fill="#a8a8a8"/><rect x="25" y="333" width="70" height="1" fill="#fff"/><rect x="25" y="453" width="70" height="1" fill="#a8a8a8"/><rect x="25" y="454" width="70" height="1" fill="#fff"/><rect x="32.8" y="151.2" width="15" height="1" fill="#ffffff"/><rect x="32.8" y="152.2" width="15" height="1.2" fill="#808080"/><path d="M37.13 147.49 A4.6 7.6 0 0 1 45.88 150.04" fill="none" stroke="#000080" stroke-width="1.5"/><path d="M45.47 153.91 A4.6 7.6 0 0 1 37.13 153.91" fill="none" stroke="#000080" stroke-width="1.5"/><path d="M34.8 145.2 L39.5 146.5 L35.5 150.39999999999998 z" fill="#000080"/><rect x="70.1" y="151.2" width="15" height="1" fill="#ffffff"/><rect x="70.1" y="152.2" width="15" height="1.2" fill="#808080"/><path d="M82.77 147.49 A4.6 7.6 0 1 0 82.77 153.91" fill="none" stroke="#000080" stroke-width="1.5"/><path d="M85.1 145.2 L80.39999999999999 146.5 L84.39999999999999 150.39999999999998 z" fill="#000080"/><rect x="41.199999999999996" y="181" width="1" height="15" fill="#ffffff"/><rect x="42.199999999999996" y="181" width="1.2" height="15" fill="#808080"/><path d="M39.84 183.44 A7.6 4.6 0 0 0 36.54 191.77" fill="none" stroke="#000080" stroke-width="1.5"/><path d="M43.5 183.68 A7.6 4.6 0 0 1 44.7 191.98" fill="none" stroke="#000080" stroke-width="1.5"/><path d="M35.4 189 L40.4 193 L34.9 193.8 z" fill="#000080"/><rect x="79.2" y="181" width="1" height="15" fill="#ffffff"/><rect x="80.2" y="181" width="1.2" height="15" fill="#808080"/><path d="M79.96 183.44 A7.6 4.6 0 0 1 83.26 191.77" fill="none" stroke="#000080" stroke-width="1.5"/><path d="M76.3 183.68 A7.6 4.6 0 0 0 75.1 191.98" fill="none" stroke="#000080" stroke-width="1.5"/><path d="M86.4 189 L81.4 193 L86.9 193.8 z" fill="#000080"/><path d="M38.0 223.45 A4.3 7.7 0 1 1 38.18 230.55" fill="none" stroke="#000080" stroke-width="1.5"/><path d="M35.9 221.2 L40.4 222.5 L36.4 226.39999999999998 z" fill="#000080"/><circle cx="41.4" cy="227.7" r="2" fill="#e0e0e0" stroke="#8a8a8a" stroke-width="0.8"/><path d="M42.4 226.7 l-1.5 1 l1.5 1 z" fill="#404040"/><path d="M83.0 223.45 A4.3 7.7 0 1 0 82.82 230.55" fill="none" stroke="#000080" stroke-width="1.5"/><path d="M85.1 221.2 L80.6 222.5 L84.6 226.39999999999998 z" fill="#000080"/><circle cx="79.6" cy="227.7" r="2" fill="#e0e0e0" stroke="#8a8a8a" stroke-width="0.8"/><path d="M78.6 226.7 l1.5 1 l-1.5 1 z" fill="#404040"/><rect x="40" y="271.5" width="2" height="2" fill="#f8f8f8"/><path d="M33 272.5 l3.5 -3 v2 h3.5 v2 h-3.5 v2 z" fill="#000080"/><path d="M49 272.5 l-3.5 -3 v2 h-3.5 v2 h3.5 v2 z" fill="#7a7a7a"/><path d="M41 264.5 l-3 3.5 h2 v3.5 h2 v-3.5 h2 z" fill="#7a7a7a"/><path d="M41 280.5 l-3 -3.5 h2 v-3.5 h2 v3.5 h2 z" fill="#7a7a7a"/><rect x="78" y="271.5" width="2" height="2" fill="#f8f8f8"/><path d="M71 272.5 l3.5 -3 v2 h3.5 v2 h-3.5 v2 z" fill="#7a7a7a"/><path d="M87 272.5 l-3.5 -3 v2 h-3.5 v2 h3.5 v2 z" fill="#000080"/><path d="M79 264.5 l-3 3.5 h2 v3.5 h2 v-3.5 h2 z" fill="#7a7a7a"/><path d="M79 280.5 l-3 -3.5 h2 v-3.5 h2 v3.5 h2 z" fill="#7a7a7a"/><rect x="40" y="309.5" width="2" height="2" fill="#f8f8f8"/><path d="M33 310.5 l3.5 -3 v2 h3.5 v2 h-3.5 v2 z" fill="#7a7a7a"/><path d="M49 310.5 l-3.5 -3 v2 h-3.5 v2 h3.5 v2 z" fill="#7a7a7a"/><path d="M41 302.5 l-3 3.5 h2 v3.5 h2 v-3.5 h2 z" fill="#000080"/><path d="M41 318.5 l-3 -3.5 h2 v-3.5 h2 v3.5 h2 z" fill="#7a7a7a"/><rect x="78" y="309.5" width="2" height="2" fill="#f8f8f8"/><path d="M71 310.5 l3.5 -3 v2 h3.5 v2 h-3.5 v2 z" fill="#7a7a7a"/><path d="M87 310.5 l-3.5 -3 v2 h-3.5 v2 h3.5 v2 z" fill="#7a7a7a"/><path d="M79 302.5 l-3 3.5 h2 v3.5 h2 v-3.5 h2 z" fill="#7a7a7a"/><path d="M79 318.5 l-3 -3.5 h2 v-3.5 h2 v3.5 h2 z" fill="#000080"/><rect x="33" y="360" width="14" height="2" fill="#000"/><rect x="43" y="349" width="1.3" height="7" fill="#000080"/><path d="M41 354 l2.6 3.5 l2.6 -3.5 z" fill="#000080"/><rect x="71" y="350" width="14" height="2" fill="#000"/><rect x="81.5" y="357" width="1.3" height="7" fill="#000080"/><path d="M79.5 359 l2.6 -3.5 l2.6 3.5 z" fill="#000080"/><circle cx="39" cy="392" r="5" fill="#e8f6fa" stroke="#000" stroke-width="1.4"/><path d="M42.5 395.5 l5 5" stroke="#000080" stroke-width="2.4" stroke-linecap="round"/><rect x="36" y="391" width="6" height="2" fill="#000"/><rect x="38" y="389" width="2" height="6" fill="#000"/><path d="M40.5 394.5 l2 2" stroke="#60c8e0" stroke-width="1"/><circle cx="77" cy="392" r="5" fill="#e8f6fa" stroke="#000" stroke-width="1.4"/><path d="M80.5 395.5 l5 5" stroke="#000080" stroke-width="2.4" stroke-linecap="round"/><rect x="74" y="391" width="6" height="2" fill="#000"/><path d="M78.5 394.5 l2 2" stroke="#60c8e0" stroke-width="1"/><path d="M33 433 l2 -3 l2 2 l2 -3 l2 4 l2 -1" fill="none" stroke="#000" stroke-width="1.3"/><rect x="42" y="434" width="6" height="2" fill="#000080"/><path d="M72 437 C73 432 73 427 74 425 C75 429 76 431 77 432 C78 429 79 427 80 426 L81 433" fill="none" stroke="#000" stroke-width="1.2"/><rect x="81" y="433" width="6" height="2" fill="#000080"/><rect x="83" y="431" width="2" height="6" fill="#000080"/><rect x="33" y="471" width="8" height="2" fill="#c01010"/><rect x="33" y="475" width="16" height="2" fill="#107010"/><rect x="41" y="479" width="8" height="2" fill="#0010c0"/><path d="M42 473 l3.5 -4 l3.5 4 z" fill="#000"/><rect x="71" y="471" width="8" height="2" fill="#c01010"/><rect x="71" y="475" width="16" height="2" fill="#107010"/><rect x="79" y="479" width="8" height="2" fill="#0010c0"/><path d="M80 469 l3.5 4 l3.5 -4 z" fill="#000"/><rect x="33" y="509" width="8" height="2" fill="#c01010"/><rect x="33" y="513" width="16" height="2" fill="#107010"/><rect x="41" y="517" width="8" height="2" fill="#0010c0"/><path d="M33 520 l3.5 -4 l3.5 4 z" fill="#000"/><rect x="71" y="509" width="8" height="2" fill="#c01010"/><rect x="71" y="513" width="16" height="2" fill="#107010"/><rect x="79" y="517" width="8" height="2" fill="#0010c0"/><path d="M71 516 l3.5 4 l3.5 -4 z" fill="#000"/>
<path d="M42.5 59.5 h7 l3 3 v9 h-10 z" fill="#fff" stroke="#000" stroke-width="1.3"/>
<rect x="36.5" y="94.5" width="141" height="23" fill="#fff" stroke="#a5a5a5"/><rect x="38" y="96.5" width="138" height="19" fill="#3388ee"/><rect x="38.5" y="96.5" width="137" height="19" fill="none" stroke="#000" stroke-dasharray="1 1"/>
</g>
<g fill="none" stroke="#000" stroke-width="1.3"><path d="M-2 712 h5 a2.5 2.5 0 0 1 0 5 h-5"/><path d="M4 712 h-2 a2.5 2.5 0 0 0 0 5 h5"/></g>
<rect x="12" y="706" width="1" height="20" fill="#c8c8c8"/>
</g>
<rect x="17" y="45" width="1" height="83" fill="#a0a0a0"/><rect x="18" y="46" width="1" height="81" fill="#fff"/><rect x="17" y="128" width="1" height="575" fill="#fff"/>
<rect x="106" y="129" width="918" height="574" fill="#000"/>
<rect x="0" y="703" width="1024" height="1" fill="#a0a0a0"/><rect x="0" y="704" width="1024" height="1" fill="#fff"/><rect x="0" y="705" width="1024" height="22" fill="#f0efee"/><rect x="17" y="727" width="1007" height="2" fill="#505860"/><rect x="0" y="727" width="17" height="2" fill="#d8d8d8"/>
<rect x="41" y="706" width="1" height="20" fill="#c8c8c8"/>
<rect x="233" y="706" width="1" height="20" fill="#c8c8c8"/>
<rect x="425" y="706" width="1" height="20" fill="#c8c8c8"/>
<rect x="617" y="706" width="1" height="20" fill="#c8c8c8"/>
<rect x="969" y="706" width="1" height="20" fill="#c8c8c8"/>
<rect x="17" y="705" width="1" height="22" fill="#fff"/>
<g fill="none" stroke="#000" stroke-width="1.5"><path d="M28 712.5 h-3.5 a3 3 0 0 0 0 6 h3"/><path d="M30 712.5 h3.5 a3 3 0 0 1 0 6 h-3"/><path d="M26.5 715.5 h5"/></g><path d="M24.5 708.5 l1 2 M29 708 v2 M33.5 708.5 l-1 2 M24.5 722 l1 -2 M29 722.5 v-2 M33.5 722 l-1 -2" stroke="#000" stroke-width="0.9"/>
<g clip-path="url(#bgclip)"><g transform="translate(-30,-1)"><g fill="none" stroke="#000" stroke-width="1.5"><path d="M28 712.5 h-3.5 a3 3 0 0 0 0 6 h3"/><path d="M30 712.5 h3.5 a3 3 0 0 1 0 6 h-3"/><path d="M26.5 715.5 h5"/></g><path d="M24.5 708.5 l1 2 M29 708 v2 M33.5 708.5 l-1 2 M24.5 722 l1 -2 M29 722.5 v-2 M33.5 722 l-1 -2" stroke="#000" stroke-width="0.9"/><rect x="41" y="706" width="1" height="20" fill="#c8c8c8"/></g></g>
<rect x="973.5" y="706.5" width="18" height="18" rx="2" fill="url(#xbtn)" stroke="#3c7fb1"/>
<rect x="996.5" y="706.5" width="18" height="18" rx="2" fill="url(#btnG)" stroke="#707070"/>
<rect x="1019.5" y="706.5" width="18" height="18" rx="2" fill="url(#xbtn)" stroke="#3c7fb1"/>
<!-- ===== 3D main view ===== -->
<defs>
<linearGradient id="gL" gradientUnits="userSpaceOnUse" x1="290" y1="194" x2="315" y2="604">
<stop offset="0" stop-color="#00883a"/>
<stop offset="0.268" stop-color="#009a20"/>
<stop offset="0.488" stop-color="#00b800"/>
<stop offset="0.585" stop-color="#00c800"/>
<stop offset="0.62" stop-color="#30d000"/>
<stop offset="0.65" stop-color="#a0dc00"/>
<stop offset="0.683" stop-color="#ffe000"/>
<stop offset="0.768" stop-color="#ffa000"/>
<stop offset="0.87" stop-color="#ff6800"/>
<stop offset="0.96" stop-color="#ff1800"/>
<stop offset="1" stop-color="#ff0000"/>
</linearGradient>
<linearGradient id="gL3" gradientUnits="userSpaceOnUse" x1="503.6" y1="207.8" x2="351.9" y2="588.7">
<stop offset="0" stop-color="#00883a"/>
<stop offset="0.268" stop-color="#009a20"/>
<stop offset="0.488" stop-color="#00b800"/>
<stop offset="0.585" stop-color="#00c800"/>
<stop offset="0.62" stop-color="#30d000"/>
<stop offset="0.65" stop-color="#a0dc00"/>
<stop offset="0.683" stop-color="#ffe000"/>
<stop offset="0.768" stop-color="#ffa000"/>
<stop offset="0.87" stop-color="#ff6800"/>
<stop offset="0.96" stop-color="#ff1800"/>
<stop offset="1" stop-color="#ff0000"/>
</linearGradient>
<linearGradient id="gR1" gradientUnits="userSpaceOnUse" x1="0" y1="200" x2="0" y2="541">
<stop offset="0" stop-color="#00883a"/>
<stop offset="0.293" stop-color="#009a10"/>
<stop offset="0.425" stop-color="#00d000"/>
<stop offset="0.5" stop-color="#a0e000"/>
<stop offset="0.548" stop-color="#ffe000"/>
<stop offset="0.645" stop-color="#ffa800"/>
<stop offset="0.762" stop-color="#ff8c00"/>
<stop offset="0.853" stop-color="#ff2000"/>
<stop offset="1" stop-color="#ff0000"/>
</linearGradient>
<linearGradient id="gR2" gradientUnits="userSpaceOnUse" x1="660" y1="342" x2="539.5" y2="561">
<stop offset="0" stop-color="#008a10"/>
<stop offset="0.22" stop-color="#009a00"/>
<stop offset="0.33" stop-color="#00d000"/>
<stop offset="0.41" stop-color="#ffe000"/>
<stop offset="0.5" stop-color="#ffb000"/>
<stop offset="0.58" stop-color="#ff9000"/>
<stop offset="0.66" stop-color="#ff4000"/>
<stop offset="0.72" stop-color="#ff0000"/>
</linearGradient>
<linearGradient id="gArr" gradientUnits="userSpaceOnUse" x1="675" y1="0" x2="743" y2="0">
<stop offset="0" stop-color="#ff0800"/><stop offset="1" stop-color="#ff6a00"/>
</linearGradient>
<linearGradient id="gB" gradientUnits="userSpaceOnUse" x1="0" y1="280" x2="0" y2="564">
<stop offset="0" stop-color="#0a8a40"/>
<stop offset="0.317" stop-color="#0a8a58"/>
<stop offset="0.405" stop-color="#10a0a0"/>
<stop offset="0.493" stop-color="#00c0e0"/>
<stop offset="0.581" stop-color="#00d8f0"/>
<stop offset="0.722" stop-color="#0070ff"/>
<stop offset="0.86" stop-color="#0030f0"/>
<stop offset="1" stop-color="#0000e0"/>
</linearGradient>
<linearGradient id="gS" gradientUnits="userSpaceOnUse" x1="0" y1="376" x2="0" y2="543">
<stop offset="0" stop-color="#009a00"/>
<stop offset="0.28" stop-color="#00d400"/>
<stop offset="0.46" stop-color="#ffe000"/>
<stop offset="0.64" stop-color="#ffa000"/>
<stop offset="0.84" stop-color="#ff6000"/>
<stop offset="1" stop-color="#ff0000"/>
</linearGradient>
<radialGradient id="gRed" gradientUnits="userSpaceOnUse" cx="350" cy="650" r="112" fx="350" fy="650">
<stop offset="0" stop-color="#ff0000"/><stop offset="0.68" stop-color="#ff0000"/><stop offset="1" stop-color="#ff0000" stop-opacity="0"/>
</radialGradient>
<clipPath id="surf"><polygon points="170,277.6 192,252 212,239 255,231 265,231 307,241 332,295 382,289 406,281 420,272 459,189.5 480,186.5 595,208 677,199.5 707,487 743.5,490.5 674.5,541 637,507 594,384 532,564 513,495 495,543 463,496 319,696 282,595 245,368 206,293 202,278.6"/></clipPath>
<filter id="soft" x="-20%" y="-20%" width="140%" height="140%"><feGaussianBlur stdDeviation="5"/></filter>
</defs>
<polygon fill="url(#gL)" points="170,277.6 192,252 212,239 255,231 265,231 307,241 332,295 382,289 406,281 420,272 459,189.5 480,186.5 595,208 677,199.5 707,487 743.5,490.5 674.5,541 637,507 594,384 532,564 513,495 495,543 463,496 319,696 282,595 245,368 206,293 202,278.6"/>
<polygon fill="url(#gL3)" points="413,390 470,390 470,496 463,496 378.2,613.7"/>
<polygon fill="url(#gRed)" points="282,595 262,470 463,470 463,496 319,696"/>
<polygon fill="url(#gR1)" points="616,291 684,260 707,487 743.5,490.5 674.5,541"/>
<polygon fill="url(#gR2)" points="594,384 616,291 674.5,541 637,507"/>
<polygon fill="url(#gArr)" points="674.5,541 707,487 743.5,490.5"/>
<polygon fill="url(#gB)" points="462,302 583,278 615.6,290.5 594,384 532,564 513,495 483,376"/>
<polygon fill="url(#gS)" points="483,376 513,495 495,543 463,496"/>
<!-- face overlays -->
<g clip-path="url(#surf)"><g filter="url(#soft)"><polygon fill="#0a6a40" opacity="0.3" points="332,293 382,287 406,279 420,270 445,300 400,322 340,326 305,300"/></g></g>
<polygon fill="#006a18" opacity="0.28" points="461,301 488,331 482,376 468,440 424,431"/>
<polygon fill="#006a40" opacity="0.25" points="462,302 488,331 513,495 483,376"/>
<polygon fill="#10a040" opacity="0.35" points="170,277.6 192,252 212,239 255,231 265,231 307,241 311,250 200,268"/>
<polygon fill="#0a9a30" opacity="0.5" points="459,189.5 480,186.5 595,208 677,199.5 678,206 595,214 480,193 458,196"/>
<polygon fill="#20b020" opacity="0.18" points="595,208 677,199.5 684,260 616,291 583,278 561,288"/>
<polygon fill="#10805a" opacity="0.35" points="420,272 459,189.5 468,200 430,280"/>
<!-- box -->
<g stroke="#ffffff" stroke-opacity="0.55" stroke-width="1" fill="none" shape-rendering="crispEdges">
<polyline points="553.9,136.5 169.5,231.5 169.5,574 320,709"/>
<polyline points="169.5,231.5 320.5,364.5 745.5,258.5 606,136.5"/>
<polyline points="320.5,364.5 320.5,698"/>
<polyline points="745.5,258.5 745.5,601 360,697"/>
</g>
<g stroke="#d8d8d8" stroke-width="1">
<path d="M112 416.5h3M125 416.5h10M155 416.5h10M185 416.5h10M205 416.5h10M235 416.5h10M585 416.5h10M665 416.5h10M685 416.5h10M715 416.5h10M765 416.5h10M795 416.5h10"/>
</g>

<!-- ===== right panel 1: front projection ===== -->
<defs>
<linearGradient id="p1L" gradientUnits="userSpaceOnUse" x1="0" y1="149" x2="0" y2="300">
<stop offset="0" stop-color="#008a38"/><stop offset="0.205" stop-color="#00a020"/><stop offset="0.37" stop-color="#00c800"/>
<stop offset="0.503" stop-color="#ffd800"/><stop offset="0.63" stop-color="#ff9000"/><stop offset="0.73" stop-color="#ff4000"/><stop offset="0.8" stop-color="#ff0000"/><stop offset="1" stop-color="#ff0000"/>
</linearGradient>
<linearGradient id="p1B" gradientUnits="userSpaceOnUse" x1="0" y1="149" x2="0" y2="295">
<stop offset="0" stop-color="#008a38"/><stop offset="0.178" stop-color="#0a8a50"/><stop offset="0.315" stop-color="#10a0b0"/>
<stop offset="0.425" stop-color="#00d0f0"/><stop offset="0.52" stop-color="#0090ff"/><stop offset="0.65" stop-color="#0040f0"/><stop offset="0.84" stop-color="#0010d0"/><stop offset="1" stop-color="#0008b0"/>
</linearGradient>
<linearGradient id="p3G" gradientUnits="userSpaceOnUse" x1="0" y1="548" x2="0" y2="692">
<stop offset="0" stop-color="#009a30"/><stop offset="0.45" stop-color="#00a020"/><stop offset="0.57" stop-color="#00c000"/>
<stop offset="0.66" stop-color="#ffd800"/><stop offset="0.74" stop-color="#ff9000"/><stop offset="0.84" stop-color="#ff2000"/><stop offset="1" stop-color="#ff0000"/>
</linearGradient>
<filter id="blur2" x="-10%" y="-10%" width="120%" height="120%"><feGaussianBlur stdDeviation="2.2"/></filter>
<filter id="blur1" x="-10%" y="-10%" width="120%" height="120%"><feGaussianBlur stdDeviation="1.2"/></filter>
<clipPath id="mapclip"><rect x="871" y="338" width="105" height="156"/></clipPath>
</defs>
<rect x="842" y="148" width="162" height="1" fill="#c0c0c0"/>
<polygon fill="url(#p1L)" points="862,149 884,149 895,190 903,218 912,285 923.5,256 932.5,272 910.3,303.5 887.3,220.4 877.4,269 855,268 844,255 855,258.5"/>
<polygon fill="url(#p1B)" points="884,149 991,149 1003,168.6 992.5,177 981.3,248.7 968.7,229.5 958.8,244 946.5,295 932.5,272 923.5,256 912,285 903,218 895,190"/>

<!-- ===== right panel 2: contour map ===== -->
<g clip-path="url(#mapclip)">
<rect x="871" y="338" width="105" height="156" fill="#009028"/>
<g filter="url(#blur1)">
<!-- left-middle cyan zone -->
<path d="M866 392 L878 389 L910 364 L922 372 L912 388 L903 410 L928 408 L932 438 L931 472 L913 483 L913 460 L896 445 L866 462 z" fill="#00c8e8"/>
<path d="M866 398 L882 392 L898 400 L906 420 L918 436 L896 440 L866 456 z" fill="#18a8c8"/>
<path d="M866 428 L876 432 L877 448 L866 452 z" fill="#0850e8"/>
<!-- inner green line in cyan zone -->
<path d="M880 392 L906 372 L912 376 L888 398 L882 410 L877 408 z" fill="#00a030"/>
<!-- top-left blue -->
<path d="M866 333 L914 333 L912 352 L907.5 364.5 L892 380 L878 391 L866 395 z" fill="#00d0f0"/>
<path d="M866 333 L904 333 L906 349 L903 358 L896 366 L882 379 L871 387 L866 388 z" fill="#0050f0"/>
<path d="M866 333 L897.6 333 L902 348 L899.8 362 L884.5 376 L866 384 z" fill="#0010c8"/>
<!-- diagonal green band with dark core -->
<path d="M914 333 L940 333 L938 356 L930 370 L922 374 L912 388 L903 410 L896 410 L888 400 L906 374 L912 352 z" fill="#00a030"/>
<path d="M922 333 L928 333 L922 360 L908 380 L898 396 L895 392 L905 376 L918 356 z" fill="#008a30"/>
<!-- pentagon -->
<path d="M922.9 372 L938 389.8 L928 409 L901 411.5 L910 386 z" fill="#00d8f0"/>
<path d="M922.5 377 L933 390 L925.5 405 L906 407 L913 389 z" fill="#0030e8"/>
<path d="M922 382 L929 391 L923.5 401 L911 403 L916 391 z" fill="#0000c8"/>
<!-- green column right -->
<path d="M936 333 L950 333 L956 378 L976 380 L976 440 L946 440 L935 476 L930 499 L926 499 L928 450 L932 410 L940 392 L934 376 L930 360 z" fill="#00a024"/>
<!-- top-right red -->
<path d="M937 333 L981 333 L981 376 L956 380 L945 375 L937 360 z" fill="#00c800"/>
<path d="M939.5 333 L981 333 L981 373 L955.8 375.5 L947 372.2 L939.4 358 z" fill="#ffe000"/>
<path d="M941.5 333 L981 333 L981 370 L956 372 L948.5 368 L942 356 z" fill="#ff9000"/>
<path d="M947 333 L981 333 L981 365.6 L957 366.5 L950 362 L947.5 352 z" fill="#ff1000"/>
<!-- small red spot -->
<path d="M938 416 L954 401 L960 414 L950 440 z" fill="#00c800"/>
<path d="M940.5 416 L953 405 L957 414 L949.5 436.5 z" fill="#ffd800"/>
<path d="M944 415 L952 408 L954 415 L949 428 z" fill="#ff3000"/>
<!-- right-edge blue -->
<path d="M962 426 L981 400 L981 436 L966 436 z" fill="#00d0f0"/>
<path d="M968 422 L981 406 L981 428 L970 428 z" fill="#0020e0"/>
<!-- thin blue spot -->
<path d="M916.4 440 L931 438.7 L931 470 L913 481.5 L913 459 z" fill="#00d0f0"/>
<path d="M920 444 L927 445 L926.5 468 L919 474 L917 458 z" fill="#0040f0"/>
<path d="M922 456 L925 457 L924.5 468 L921 470 z" fill="#0000c8"/>
<!-- bottom-left green core -->
<path d="M884 470 L898 458 L908 476 L906 499 L882 499 z" fill="#008a28"/>
<!-- bottom-right red -->
<path d="M946 440 L981 438 L981 499 L931 499 L934 478 z" fill="#00d000"/>
<path d="M947 442 L981 441 L981 499 L934.5 499 L937 478 z" fill="#ffe000"/>
<path d="M948 447 L981 446 L981 499 L939 499 L941 478 z" fill="#ff9800"/>
<path d="M947 462 L981 461 L981 499 L946 499 z" fill="#ff0000"/>
</g>
</g>
<rect x="975.5" y="338" width="1" height="156" fill="#e0e0e0" opacity="0.8"/>
<rect x="871" y="493.5" width="105" height="1" fill="#d0d0d0" opacity="0.6"/>

<!-- ===== right panel 3: perspective ===== -->
<defs>
<linearGradient id="p3R" gradientUnits="userSpaceOnUse" x1="0" y1="549" x2="0" y2="618">
<stop offset="0" stop-color="#009a20"/><stop offset="0.3" stop-color="#00b800"/><stop offset="0.45" stop-color="#ffd000"/><stop offset="0.6" stop-color="#ff9000"/><stop offset="0.72" stop-color="#ff1000"/><stop offset="1" stop-color="#ff0000"/>
</linearGradient>
<linearGradient id="p3V" gradientUnits="userSpaceOnUse" x1="0" y1="600" x2="0" y2="642">
<stop offset="0" stop-color="#009a30"/><stop offset="0.3" stop-color="#10a090"/><stop offset="0.55" stop-color="#00d0f0"/><stop offset="1" stop-color="#0010d0"/>
</linearGradient>
<linearGradient id="p3C" gradientUnits="userSpaceOnUse" x1="880" y1="590" x2="920" y2="565">
<stop offset="0" stop-color="#2098e8"/><stop offset="0.3" stop-color="#00c8f0"/><stop offset="1" stop-color="#10b0c0"/>
</linearGradient>
<linearGradient id="p3F" gradientUnits="userSpaceOnUse" x1="0" y1="600" x2="0" y2="692">
<stop offset="0" stop-color="#009a20"/><stop offset="0.22" stop-color="#00a800"/><stop offset="0.36" stop-color="#00d000"/><stop offset="0.457" stop-color="#ffd800"/><stop offset="0.565" stop-color="#ff9000"/><stop offset="0.652" stop-color="#ff2000"/><stop offset="1" stop-color="#ff0000"/>
</linearGradient>
<radialGradient id="p3Red" gradientUnits="userSpaceOnUse" cx="905" cy="705" r="52">
<stop offset="0" stop-color="#ff0000"/><stop offset="0.6" stop-color="#ff0000"/><stop offset="1" stop-color="#ff0000" stop-opacity="0"/>
</radialGradient>
</defs>
<polygon fill="#009a28" points="832.6,602.5 858.9,590.9 875.4,592.7 891.8,579.5 916,556.5 940,555.4 960,555.8 981.8,548.8 995,592.7 1013.6,601.4 996,617.9 979.6,608 977.4,594.9 958.8,642 947.8,624.5 940.1,645.3 905,692.5 886.3,667.3 869.9,632.2 845.7,607"/>
<!-- front ridge lower face with red V -->
<polygon fill="url(#p3F)" points="845.7,607 875,618 898,613 912,600 925,587 966,586 977.4,594.9 958.8,642 947.8,624.5 940.1,645.3 905,692.5 886.3,667.3 869.9,632.2"/>
<polygon fill="url(#p3Red)" points="869.9,632.2 940.1,645.3 905,692.5 886.3,667.3"/>
<g filter="url(#blur1)">
<polygon fill="url(#p3C)" points="876,592 893,577 907,565 917,562 922,575 931,577 930,589 912,600 898,613 878,617 868,606"/>
<polygon fill="#10c0d8" points="920,576 956,575 960,583 930,590 920,588"/>
<polygon fill="#08a040" points="917,558 958,558 956,573 922,574"/>
</g>
<polygon fill="url(#p3R)" points="981.8,548.8 995,592.7 1013.6,601.4 996,617.9 979.6,608 967,590 962,558"/>
<polygon fill="url(#p3V)" points="937,610 977.4,594.9 958.8,642 947.8,624.5"/>
<polygon fill="#0010d0" points="940,554 960,555 958,558 942,557.5"/>

<rect x="110.5" y="133.5" width="695" height="565" fill="none" stroke="#a04a48"/>
<rect x="809.5" y="133.5" width="230" height="185" fill="none" stroke="#e0e0e0"/>
<rect x="809.5" y="322.5" width="230" height="187" fill="none" stroke="#e0e0e0"/>
<rect x="809.5" y="513.5" width="230" height="185" fill="none" stroke="#e0e0e0"/>
</svg>
<div class="a" style="left:42px;top:1px;font-size:12px;color:#18283a;letter-spacing:-0.2px;line-height:14px">Visualizer 3D - "drb orta.v3d"</div>
<div class="a" style="left:0;top:0;width:17px;height:20px;overflow:hidden"><div class="a" style="left:11px;top:1px;font-size:12px;color:#18283a;line-height:14px">V</div></div>
<div class="a" style="left:0;top:28px;width:17px;height:16px;overflow:hidden"><div class="mi" style="top:0;left:-7px">Dosya</div></div>
<div class="mi" style="left:25px">Dosya</div>
<div class="mi" style="left:76px">Grafik</div>
<div class="mi" style="left:126px">Görüntü</div>
<div class="mi" style="left:189px">Ekstra</div>
<div class="mi" style="left:239px">Yardım</div>
<div class="dg" style="left:462px;top:59px">1</div>
<div class="dg" style="left:494px">2</div>
<div class="dg" style="left:528px">3</div>
<div class="dg" style="left:562px">4</div>
<div class="dg" style="left:596px">5</div>
<div class="st" style="left:48px">Arama hattı:1</div>
<div class="st" style="left:239px">Darbe:1</div>
<div class="a" style="left:978px;top:708px;font-size:12px;font-weight:bold;line-height:14px">X</div>
<div class="a" style="left:1001px;top:708px;font-size:12px;font-weight:bold;line-height:14px">Y</div>
</body></html>
